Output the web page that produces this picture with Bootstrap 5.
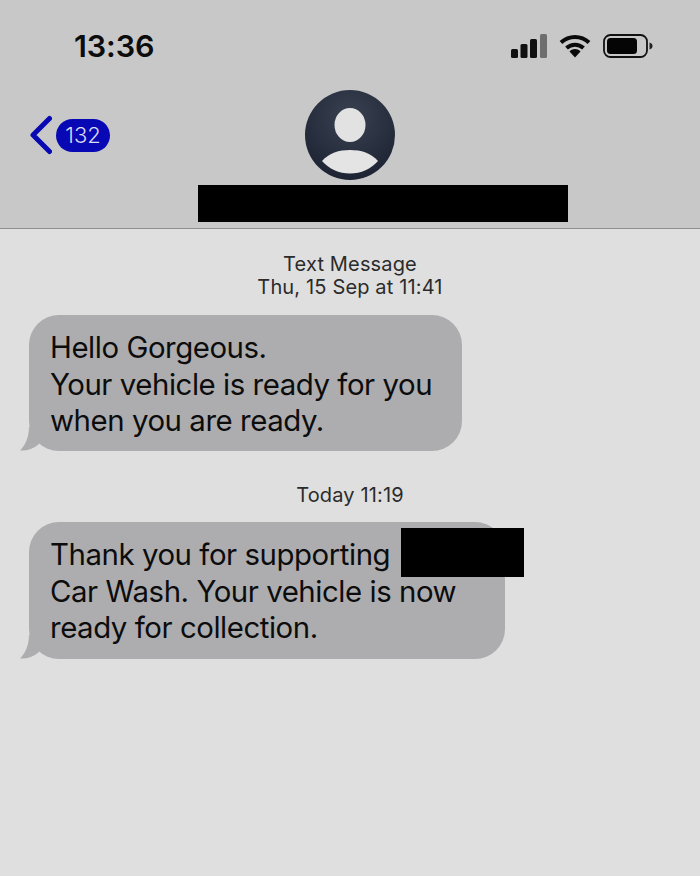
<!DOCTYPE html>
<html lang="en">
<head>
    <meta charset="UTF-8">
    <meta name="viewport" content="width=device-width, initial-scale=1.0">
    <title>Messages</title>
    <link rel="stylesheet" href="https://cdn.jsdelivr.net/npm/bootstrap@5.3.3/dist/css/bootstrap.min.css">
    <style>
        body { background: #dfdfdf; font-family: Inter, "Liberation Sans", sans-serif; color: #0a0a0a; height: 876px; overflow: hidden; }
        .top-head { background: #c8c8c8; height: 229px; border-bottom: 1px solid #8f8f8f; padding-top: 27px; }
        .status-row { height: 38px; padding: 0 47px 0 74px; }
        .clock { font-size: 30.5px; font-weight: 600; line-height: 38px; letter-spacing: -.1px; color: #0c0c0c; }
        .nav-row { display: grid; grid-template-columns: 1fr 90px 1fr; height: 90px; margin-top: 25px; }
        .back-wrap { padding-left: 30px; gap: 4px; height: 90px; }
        .count-pill { background: #0808b4; color: #dcdcf0; font-size: 22px; font-weight: 300; line-height: 33px; width: 54px; border-radius: 17px; text-align: center; }
        .black-bar { background: #000; }
        .name-bar { width: 370px; height: 37px; margin: 5px 0 0 198px; }
        .thread { padding: 0 0 0 29px; }
        .stamp { font-size: 20px; line-height: 23px; letter-spacing: .15px; color: #2b2b2b; text-align: center; margin-left: -29px; }
        .bubble { position: relative; background: #adadb0; border-radius: 30px; font-size: 29.4px; line-height: 36.5px; padding: 15px 20px 11px 21px; letter-spacing: -.45px; color: #0c0c0c; white-space: nowrap; }
        .bubble-tail { position: absolute; left: -10px; bottom: 0; }
        .one { width: 433px; height: 136px; margin-top: 16px; }
        .two { width: 476px; height: 137px; margin-top: 15px; }
        .hide-word { position: absolute; left: 372px; top: 6px; width: 123px; height: 49px; }
    </style>
</head>
<body>
    <header class="top-head">
        <div class="status-row d-flex justify-content-between align-items-center">
            <div class="clock">13:36</div>
            <div class="d-flex align-items-center gap-2">
                <svg width="36" height="24" viewBox="0 0 36 24">
                    <rect x="0" y="15" width="7" height="9" rx="1.5" fill="#111"/>
                    <rect x="9.5" y="10" width="7" height="14" rx="1.5" fill="#111"/>
                    <rect x="19" y="5" width="7" height="19" rx="1.5" fill="#111"/>
                    <rect x="29" y="0" width="7" height="24" rx="1.5" fill="#6e6e6e"/>
                </svg>
                <svg class="ms-1" width="32" height="24" viewBox="0 0 32 24">
                    <path d="M2 8.5C10 1 22 1 30 8.5" fill="none" stroke="#0a0a0a" stroke-width="4"/>
                    <path d="M7.5 14C12.5 9.5 19.5 9.5 24.5 14" fill="none" stroke="#0a0a0a" stroke-width="4"/>
                    <path d="M10.5 17.5C14 14.3 18 14.3 21.5 17.5L16 23.5Z" fill="#0a0a0a"/>
                </svg>
                <svg class="ms-1" width="50" height="24" viewBox="0 0 50 24">
                    <rect x="1" y="1" width="43" height="22" rx="6.5" fill="none" stroke="#111" stroke-width="1.8"/>
                    <rect x="4" y="4" width="30" height="16" rx="3.5" fill="#050505"/>
                    <path d="M46.5 8.5C49 9.5 49.5 10.5 49.5 12C49.5 13.5 49 14.5 46.5 15.5Z" fill="#222"/>
                </svg>
            </div>
        </div>
        <div class="nav-row">
            <div class="back-wrap d-flex align-items-center">
                <svg width="22" height="40" viewBox="0 0 22 40">
                    <path d="M19.5 3.5L3 20L19.5 36.5" fill="none" stroke="#0808b4" stroke-width="5" stroke-linecap="round" stroke-linejoin="round"/>
                </svg>
                <div class="count-pill">132</div>
            </div>
            <svg width="90" height="90" viewBox="0 0 90 90">
                <defs>
                    <radialGradient id="avatarFill" cx=".5" cy=".3" r=".75">
                        <stop offset="0" stop-color="#3a4252"/>
                        <stop offset="1" stop-color="#1b2130"/>
                    </radialGradient>
                </defs>
                <circle cx="45" cy="45" r="45" fill="url(#avatarFill)"/>
                <ellipse cx="45" cy="35" rx="15.5" ry="17" fill="#e2e2e2"/>
                <path d="M17 71C24 63 34 60 45 60C56 60 66 63 73 71C66 79 56 83.5 45 83.5C34 83.5 24 79 17 71Z" fill="#e4e4e4"/>
            </svg>
            <div></div>
        </div>
        <div class="black-bar name-bar"></div>
    </header>
    <main class="thread">
        <div class="stamp" style="margin-top: 24px">Text Message<br>Thu, 15 Sep at 11:41</div>
        <div class="bubble one">
            Hello Gorgeous.<br>Your vehicle is ready for you<br>when you are ready.
            <svg class="bubble-tail" width="24" height="24" viewBox="0 0 24 24"><path d="M10 0C10 10 6 19 1 23.5C8 24 14 22 20 17L22 0Z" fill="#adadb0"/></svg>
        </div>
        <div class="stamp" style="margin-top: 33px">Today 11:19</div>
        <div class="bubble two">
            Thank you for supporting<br>Car Wash. Your vehicle is now<br>ready for collection.
            <div class="black-bar hide-word"></div>
            <svg class="bubble-tail" width="24" height="24" viewBox="0 0 24 24"><path d="M10 0C10 10 6 19 1 23.5C8 24 14 22 20 17L22 0Z" fill="#adadb0"/></svg>
        </div>
    </main>
    <script src="https://cdn.jsdelivr.net/npm/bootstrap@5.3.3/dist/js/bootstrap.bundle.min.js"></script>
</body>
</html>
